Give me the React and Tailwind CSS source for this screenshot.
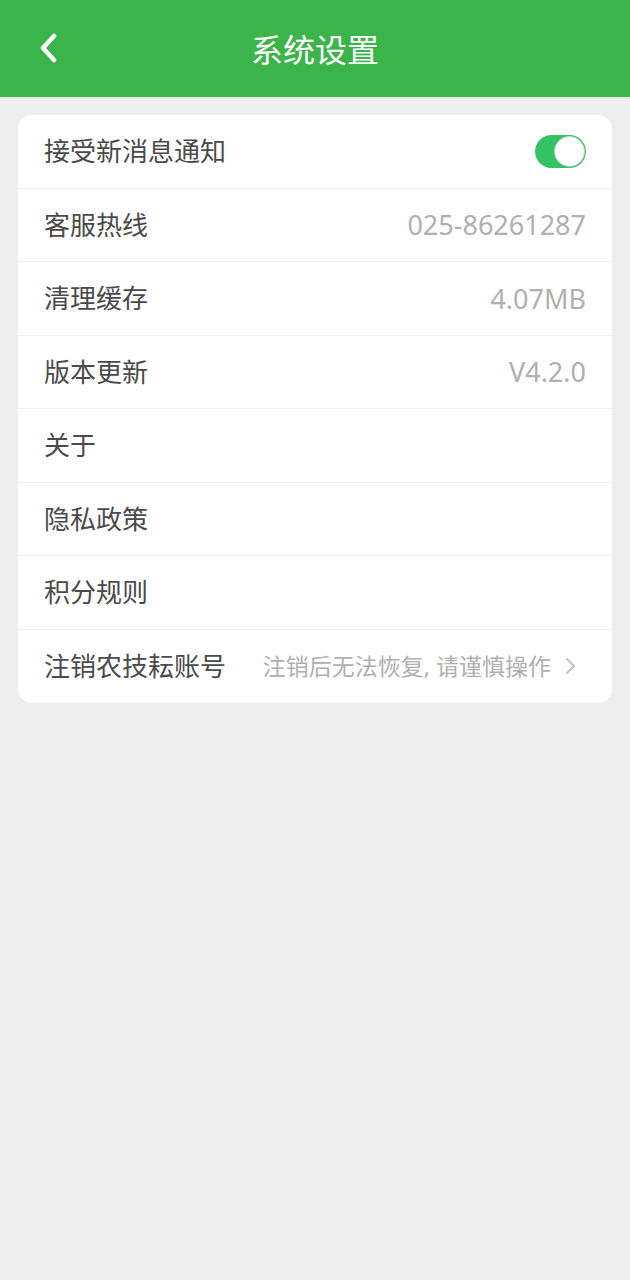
import React from "react";

const font = { fontFamily: '"Noto Sans", "Noto Sans CJK SC", sans-serif' };

function Row({ label, right, last }) {
  return (
    <div className={`flex items-center justify-between h-[73.5px] pl-[26px] pr-[26px] ${last ? "" : "border-b border-[#efefef]"}`}>
      <span className="text-[26px] text-[#4a4a4a] leading-none">{label}</span>
      {right}
    </div>
  );
}

export default function App() {
  const val = (t) => <span className="text-[27px] text-[#b0b0b0] leading-none">{t}</span>;
  return (
    <div className="w-[630px] h-[1280px] bg-[#eeeeee]" style={font}>
      <div className="relative h-[97px] bg-[#3bb54a] flex items-center justify-center">
        <svg className="absolute left-[38px] top-[33px]" width="20" height="30" viewBox="0 0 20 30">
          <path d="M16 3 L5 15 L16 27" fill="none" stroke="#fff" strokeWidth="4.5" strokeLinecap="round" strokeLinejoin="round" />
        </svg>
        <span className="text-[32px] text-white leading-none mt-[3px]">系统设置</span>
      </div>
      <div className="px-[18px] pt-[18px]">
        <div className="bg-white rounded-[14px] overflow-hidden">
          <Row
            label="接受新消息通知"
            right={
              <div className="w-[51px] h-[33px] rounded-full bg-[#34c466] flex items-center justify-end pr-[1px]">
                <div className="w-[31px] h-[31px] rounded-full bg-white border border-[#c9d6cc]" />
              </div>
            }
          />
          <Row label="客服热线" right={val("025-86261287")} />
          <Row label="清理缓存" right={val("4.07MB")} />
          <Row label="版本更新" right={val("V4.2.0")} />
          <Row label="关于" />
          <Row label="隐私政策" />
          <Row label="积分规则" />
          <Row
            label="注销农技耘账号"
            last
            right={
              <div className="flex items-center gap-[13px] mr-[10px]">
                <span className="text-[23px] text-[#b0b0b0] leading-none">注销后无法恢复, 请谨慎操作</span>
                <svg width="12" height="18" viewBox="0 0 12 18">
                  <path d="M3 2 L10 9 L3 16" fill="none" stroke="#c4c4c4" strokeWidth="2" strokeLinecap="round" strokeLinejoin="round" />
                </svg>
              </div>
            }
          />
        </div>
      </div>
    </div>
  );
}
